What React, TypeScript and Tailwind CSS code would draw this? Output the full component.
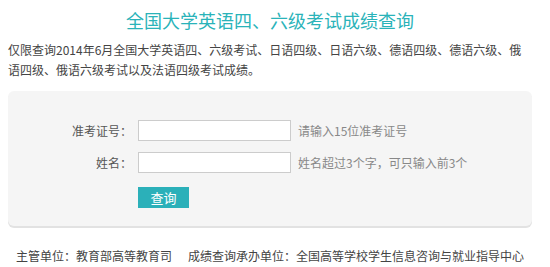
const font = { fontFamily: '"Noto Sans CJK SC", "Noto Sans", sans-serif' };

const rows = [
  { label: "准考证号：", hint: "请输入15位准考证号" },
  { label: "姓名：", hint: "姓名超过3个字，可只输入前3个" },
];

export default function App() {
  return (
    <div className="w-[550px] h-[267px] bg-white overflow-hidden" style={font}>
      <div className="w-[540px] px-2">
        <h1 className="pt-[9px] text-center text-[18px] leading-[22px] text-[#2ab3b9]">
          全国大学英语四、六级考试成绩查询
        </h1>
        <p className="mt-[9px] text-[12px] leading-[20px] text-[#444]">
          仅限查询2014年6月全国大学英语四、六级考试、日语四级、日语六级、德语四级、德语六级、俄语四级、俄语六级考试以及法语四级考试成绩。
        </p>

        {/* query panel */}
        <div className="mt-[11px] h-[135px] rounded-md bg-[#f5f5f5] shadow-[0_2px_0_#e2e2e2] pt-[29px]">
          <div className="flex flex-col gap-[11px]">
            {rows.map((r) => (
              <div key={r.label} className="flex items-center">
                <span className="w-[124px] text-right text-[12px] text-[#555]">{r.label}</span>
                <input
                  type="text"
                  className="ml-[6px] w-[153px] h-[21px] bg-white border border-[#ccc] outline-none"
                />
                <span className="ml-[7px] text-[12px] text-[#888]">{r.hint}</span>
              </div>
            ))}
            <div className="pl-[130px]">
              <button className="w-[51px] h-[21px] bg-[#2bb0b9] text-white text-[13px] leading-[21px]">
                查询
              </button>
            </div>
          </div>
        </div>

        <div className="mt-[21px] pl-2 text-[12px] text-[#444]">
          <span>主管单位：教育部高等教育司</span>
          <span className="ml-4">成绩查询承办单位：全国高等学校学生信息咨询与就业指导中心</span>
        </div>
      </div>
    </div>
  );
}
